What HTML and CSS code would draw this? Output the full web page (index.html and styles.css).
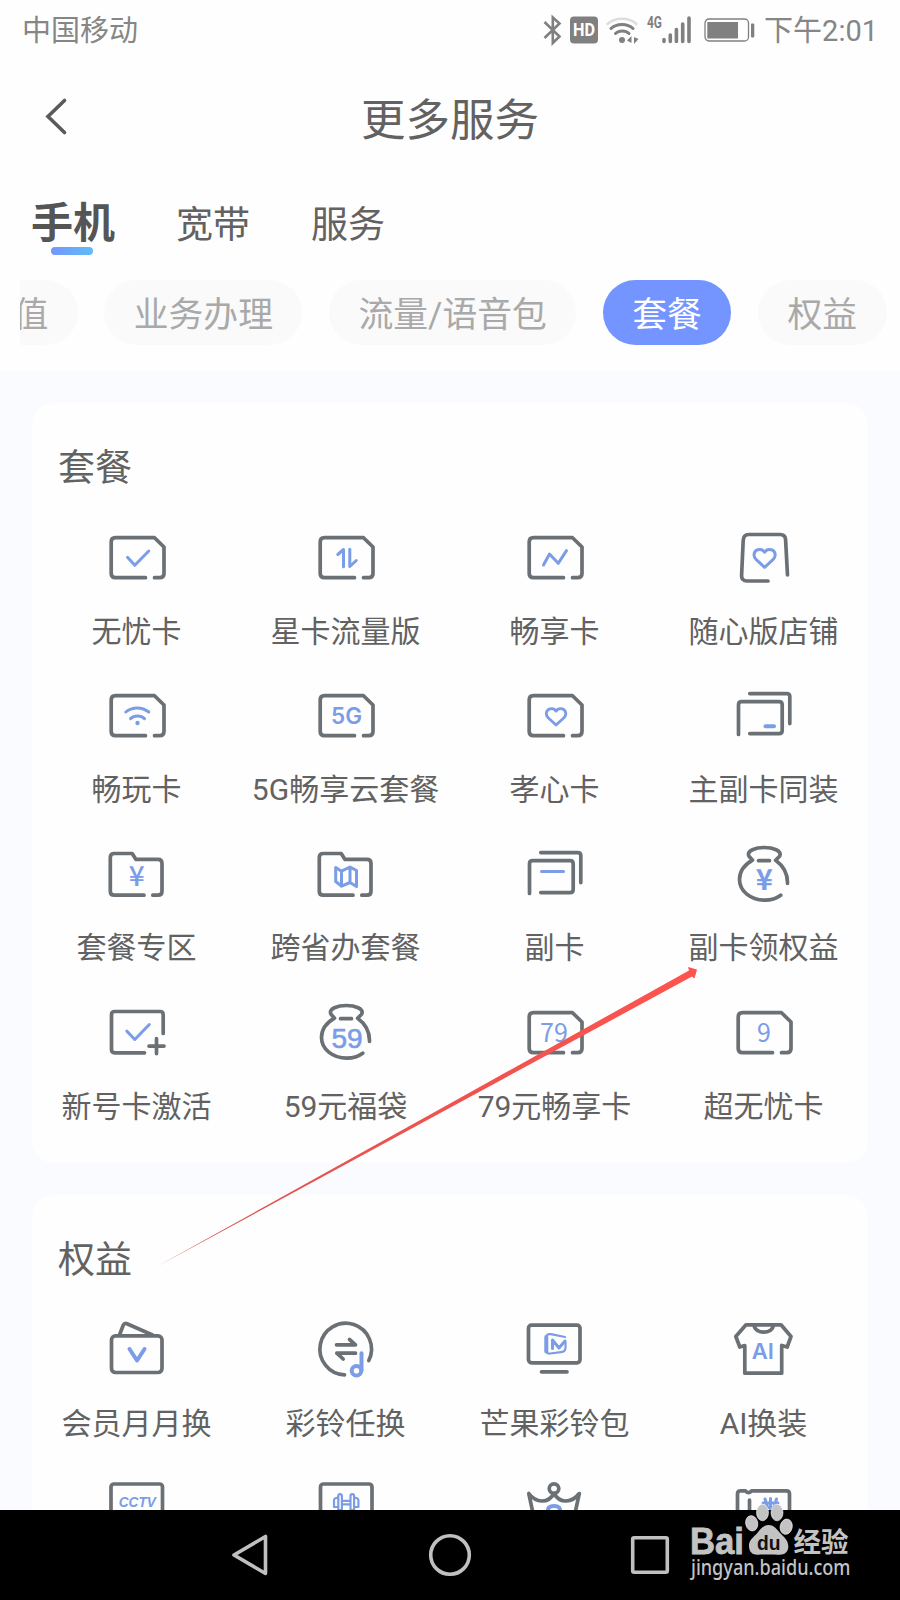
FILE: index.html
```html
<!DOCTYPE html>
<html lang="zh-CN">
<head>
    <meta charset="UTF-8">
    <meta name="viewport" content="width=device-width, initial-scale=1.0">
    <title>更多服务</title>
    <link rel="stylesheet" href="styles.css">
</head>
<body>
    <!-- shared shapes -->
    <svg class="defs" width="0" height="0">
        <symbol id="sim" viewBox="0 0 64 64">
            <path d="M40.5 51.7H10.5q-4.3 0-4.3-4.3V16q0-4.3 4.3-4.3H49.5L59 21V47.4q0 4.3-4.3 4.3H49.5"/>
        </symbol>
        <symbol id="folder" viewBox="0 0 64 64">
            <path d="M39 52.2H9.3q-4 0-4-4V14.5q0-4 4-4H27.2L31 16.4H53q4 0 4 4V48.2q0 4-4 4H47.8"/>
        </symbol>
        <symbol id="cards" viewBox="0 0 64 64">
            <path d="M17.8 9.6H54.8q3 0 3 3V39.6M6.5 50.4V20.9q0-3.2 3.2-3.2H47q3.2 0 3.2 3.2V46.4q0 3.2-3.2 3.2H17.8"/>
        </symbol>
        <symbol id="bag" viewBox="0 0 64 64">
            <path d="M48.7 52.2C44.5 55.3 39 57.2 33 57.2C18.5 57.2 7.5 48 7.5 36.5C7.5 28 13 21.5 20.5 17.2L17 13.2C14 7.5 24 4.5 32.3 4.5S50.5 7.5 47.6 13.2L43.6 17.2C51 22.5 55.8 30 55.5 40.5M26.5 17.7H37.5"/>
        </symbol>
        <symbol id="heart" viewBox="0 0 64 64">
            <path d="M32.6 41.3L24.3 33.7C20.7 30.2 21.5 25.2 25.9 23.7C28.6 23 31.2 24 32.6 26.2C34 24 36.6 23 39.3 23.7C43.7 25.2 44.5 30.2 40.9 33.7Z"/>
        </symbol>
    </svg>

    <div class="status-bar">
        <span class="carrier">中国移动</span>
        <div class="status-icons">
            <svg class="bt" width="19" height="32" viewBox="0 0 19 32"><path d="M1.5 8L16.5 22.5L9.8 29V3.5L16.5 9.5L1.5 24"/></svg>
            <svg class="hd" width="28" height="28" viewBox="0 0 28 28"><rect width="28" height="27" y=".5" rx="4"/><text x="14" y="20" textLength="22" lengthAdjust="spacingAndGlyphs">HD</text></svg>
            <svg class="wifi" width="34" height="32" viewBox="0 0 34 32">
                <path class="faint" d="M1.5 10C9 3 23 3 30.5 10"/>
                <path d="M5 14.5C10.5 9 21.5 9 27 14.5M9.5 19.5C13 16 19.5 16 23 19.5"/>
                <circle cx="16" cy="26" r="3"/><path class="solid" d="M25.5 22v7l-4.5-2.500zM28 23v7l4.5-5z"/>
            </svg>
            <svg class="signal" width="46" height="32" viewBox="0 0 46 32">
                <text x="1" y="14" textLength="15" lengthAdjust="spacingAndGlyphs">4G</text>
                <path d="M18 25.5v2M24.3 21v6.500M30.4 15.5v12M36.7 10v17.5M43 4v23.5"/>
            </svg>
            <svg class="battery" width="51" height="24" viewBox="0 0 51 24">
                <rect class="case" x="1" y="1" width="43.5" height="22" rx="4"/>
                <rect x="3.3" y="4" width="30.7" height="16.5"/><rect x="47" y="5.5" width="3.3" height="14" rx="1"/>
            </svg>
        </div>
        <span class="time">下午2:01</span>
    </div>

    <header class="title-bar">
        <svg class="back" width="24" height="40" viewBox="0 0 24 40"><path d="M20.5 3.5L4 19.5L20.5 35.5"/></svg>
        <h1>更多服务</h1>
    </header>

    <nav class="tabs">
        <a class="tab active">手机</a>
        <a class="tab">宽带</a>
        <a class="tab">服务</a>
    </nav>

    <div class="chips">
        <span class="chip">充值</span>
        <span class="chip">业务办理</span>
        <span class="chip">流量/语音包</span>
        <span class="chip active">套餐</span>
        <span class="chip">权益</span>
    </div>

    <main class="content">
        <section class="card">
            <h2>套餐</h2>
            <div class="grid">
                <div class="item">
                    <svg class="icon" viewBox="0 0 64 64"><use href="#sim"/><path class="b" d="M22.5 31.3L29.8 39.3L43.8 25"/></svg>
                    <span>无忧卡</span>
                </div>
                <div class="item">
                    <svg class="icon" viewBox="0 0 64 64"><use href="#sim"/><path class="b" d="M23.8 28.5L29.5 23.5V40.7M35.8 23.3V40.5L42.3 34.5"/></svg>
                    <span>星卡流量版</span>
                </div>
                <div class="item">
                    <svg class="icon" viewBox="0 0 64 64"><use href="#sim"/><path class="b" d="M20.5 39L26.5 28L35.2 37.3L43.5 24.7"/></svg>
                    <span>畅享卡</span>
                </div>
                <div class="item">
                    <svg class="icon" viewBox="0 0 64 64"><path d="M36 55H15c-3.6 0-5.6-2-5.4-5.5l1.6-35c.2-4 2-6 5.5-6H48c3.5 0 5.5 2 5.6 5.5L55.5 49"/><use class="b" href="#heart"/></svg>
                    <span>随心版店铺</span>
                </div>

                <div class="item">
                    <svg class="icon" viewBox="0 0 64 64"><use href="#sim"/><path class="b" d="M20.8 28C27 22.5 37 22.5 43.8 28M25.5 34.6C29 31 36 31 39.5 34.6"/><circle class="bf" cx="32.5" cy="39" r="2.2"/></svg>
                    <span>畅玩卡</span>
                </div>
                <div class="item">
                    <svg class="icon" viewBox="0 0 64 64"><use href="#sim"/><text class="t5g" x="32.5" y="39.7">5G</text></svg>
                    <span>5G畅享云套餐</span>
                </div>
                <div class="item">
                    <svg class="icon" viewBox="0 0 64 64"><use href="#sim"/><use class="b" href="#heart" x="3" y="3" width="59" height="59"/></svg>
                    <span>孝心卡</span>
                </div>
                <div class="item">
                    <svg class="icon" viewBox="0 0 64 64"><use href="#cards"/><path class="b thick" d="M33.5 42.3H42"/></svg>
                    <span>主副卡同装</span>
                </div>

                <div class="item">
                    <svg class="icon" viewBox="0 0 64 64"><use href="#folder"/><text class="yen" x="31.7" y="42.8">¥</text></svg>
                    <span>套餐专区</span>
                </div>
                <div class="item">
                    <svg class="icon" viewBox="0 0 64 64"><use href="#folder"/><path class="b" d="M21.7 24.5L27.5 28.2L36 24L42.5 27.5V43.5L36 39.5L27.5 43.2L21.7 38.5ZM27.5 28.2V43.2M36 24V39.5"/></svg>
                    <span>跨省办套餐</span>
                </div>
                <div class="item">
                    <svg class="icon" viewBox="0 0 64 64"><use href="#cards"/><path class="b" d="M18.5 28.5H40.5"/></svg>
                    <span>副卡</span>
                </div>
                <div class="item">
                    <svg class="icon" viewBox="0 0 64 64"><use href="#bag"/><text class="yen bold" x="32.3" y="46.5">¥</text></svg>
                    <span>副卡领权益</span>
                </div>

                <div class="item">
                    <svg class="icon" viewBox="0 0 64 64"><path d="M39.5 51.8H9.7q-3.2 0-3.2-3.2V13.7q0-3.2 3.2-3.2H55q3.2 0 3.2 3.2V32.5M44 45.1H59M51.5 37.6V52.6"/><path class="b" d="M21.8 30.1L29.8 38.5L44.3 23.5"/></svg>
                    <span>新号卡激活</span>
                </div>
                <div class="item">
                    <svg class="icon" viewBox="0 0 64 64"><use href="#bag"/><text class="t59" x="33" y="47.3">59</text></svg>
                    <span>59元福袋</span>
                </div>
                <div class="item">
                    <svg class="icon" viewBox="0 0 64 64"><use href="#sim"/><text class="num" x="31" y="40.5">79</text></svg>
                    <span>79元畅享卡</span>
                </div>
                <div class="item">
                    <svg class="icon" viewBox="0 0 64 64"><use href="#sim"/><text class="num" x="32" y="40.5">9</text></svg>
                    <span>超无忧卡</span>
                </div>
            </div>
        </section>

        <section class="card">
            <h2>权益</h2>
            <div class="grid">
                <div class="item">
                    <svg class="icon" viewBox="0 0 64 64"><rect x="6.5" y="17.8" width="50.5" height="36.7" rx="4"/><path d="M14.5 17L18.3 7Q19.5 4.7 22 5.7L47.5 17"/><path class="b thick" d="M24.5 31L32 42.5L39.5 31"/></svg>
                    <span>会员月月换</span>
                </div>
                <div class="item">
                    <svg class="icon" viewBox="0 0 64 64"><path d="M30.5 56.8A25.8 25.8 0 1 1 54.8 42.5M22.5 26.8H41.5L35.5 21.5M41.5 35.2H22.8L29.2 41"/><path class="b thick" d="M47.5 35.2V52.5"/><circle class="b thick" cx="42.5" cy="52.8" r="4.8"/></svg>
                    <span>彩铃任换</span>
                </div>
                <div class="item">
                    <svg class="icon" viewBox="0 0 64 64"><rect x="5.5" y="7.2" width="51.5" height="37.6" rx="3"/><path d="M18.5 53.8H44"/><path class="b thin" d="M42 19L28 16.2C24.5 15.700 23 17 23 20V31.5C23 34.5 24 35.800 27 35.5L38 34.2C41 33.8 42.500 32.500 42.5 29.5V24"/><path class="b thick" d="M23.3 19V33.5"/><path class="b" d="M29.5 30.5V22L36 30L42 23"/></svg>
                    <span>芒果彩铃包</span>
                </div>
                <div class="item">
                    <svg class="icon" viewBox="0 0 64 64"><path d="M14 6.8H49L59 18.5L55.2 29L49.7 27.5V55.2H12.8V27.5L7.8 29L3.8 18.5ZM22 7C23 16.5 40.5 16.5 41.5 7"/><text class="ai" x="30.7" y="40.7">AI</text></svg>
                    <span>AI换装</span>
                </div>

                <div class="item">
                    <svg class="icon" viewBox="0 0 64 64"><rect x="6" y="8" width="51.5" height="44" rx="3"/><text class="cctv" x="32.3" y="31.3" textLength="37" lengthAdjust="spacingAndGlyphs">CCTV</text></svg>
                </div>
                <div class="item">
                    <svg class="icon" viewBox="0 0 64 64"><rect x="6.5" y="8" width="51.5" height="44" rx="3"/><path class="b thin" d="M24.3 20q0-1.800 1.8-1.800t1.8 1.8V34h-3.6zM36.5 20q0-1.800 1.8-1.800t1.8 1.8V34h-3.6zM24.3 22q-4.3-.5-4.3 2.5v6.500h4.3M40.1 22q4.3-.5 4.3 2.5v6.500h-4.3M28 24.8h8.500M28 28.3h8.500"/></svg>
                </div>
                <div class="item">
                    <svg class="icon" viewBox="0 0 64 64"><circle cx="31" cy="12.6" r="4.8"/><path d="M5.8 17.5L11 42H51L56.3 17.5C49 27 37 28 31 17.5C25 28 13 27 5.8 17.5Z"/><path class="b thick" d="M25 36Q24 30 31 30Q38 30 37 36"/></svg>
                </div>
                <div class="item">
                    <svg class="icon" viewBox="0 0 64 64"><path d="M5.500 50V18q0-3.2 3.2-3.2H13.5Q16.5 18.5 19.5 14.8H54.3q3.2 0 3.2 3.2V50M17.500 24V40"/><path class="b" d="M38.5 22.5V34M31 27L46 27M33 23L35.5 31M44.5 23L42 31M30 31.5H47.5"/></svg>
                </div>
            </div>
        </section>
    </main>

    <footer class="nav-bar">
        <svg width="40" height="44" viewBox="0 0 40 44"><path d="M4 22L35.5 3.5V40.5Z"/></svg>
        <svg width="44" height="44" viewBox="0 0 44 44"><circle cx="22" cy="22" r="19.3"/></svg>
        <svg width="40" height="44" viewBox="0 0 40 44"><rect x="2.7" y="4.7" width="34.6" height="34.6" rx="1.5"/></svg>
    </footer>

    <!-- pointer arrow -->
    <svg class="arrow" width="545" height="302" viewBox="155 966 545 302">
        <defs>
            <linearGradient id="fade" x1="0" y1="1" x2="1" y2="0">
                <stop offset="0" stop-color="#c9534f"/>
                <stop offset=".2" stop-color="#e2534f"/>
                <stop offset="1" stop-color="#ff534f"/>
            </linearGradient>
        </defs>
        <path fill="url(#fade)" d="M157 1266.5L450 1103.5L689 970.5L688 967L697 969.5L694.5 978.5L692 976.5L450 1107.800Z"/>
    </svg>

    <svg class="watermark" width="175" height="85" viewBox="685 1500 175 85">
        <g class="paw">
            <ellipse cx="751.7" cy="1523.3" rx="6" ry="7.7" transform="rotate(-12 751.7 1523.3)"/>
            <ellipse cx="762.5" cy="1512.5" rx="6" ry="8.3"/>
            <ellipse cx="777" cy="1512.5" rx="6" ry="8.3"/>
            <ellipse cx="786.2" cy="1526.7" rx="6" ry="7.7" transform="rotate(12 786.2 1526.7)"/>
            <path d="M768.5 1525C763 1525 760 1530 756 1534.5C751 1539 748.5 1542 749 1547C749.5 1552.5 753 1555 758 1554.7C763 1554.3 774 1554.3 779 1554.7C784 1555 788 1552.5 788.3 1547C788.5 1541 785 1538 781.5 1534.5C777 1530 774.5 1525 768.5 1525Z"/>
        </g>
        <text class="bai" x="690" y="1553.5" textLength="54" lengthAdjust="spacingAndGlyphs">Bai</text>
        <text class="du" x="757" y="1549.5" textLength="23.500" lengthAdjust="spacingAndGlyphs">du</text>
        <text class="exp" x="793.5" y="1551.5" textLength="55">经验</text>
        <text class="url" x="691" y="1575" textLength="159.500" lengthAdjust="spacingAndGlyphs">jingyan.baidu.com</text>
    </svg>
</body>
</html>
```
FILE: styles.css
```css
* {
    box-sizing: border-box;
}
body {
    margin: 0;
    width: 900px;
    height: 1600px;
    overflow: hidden;
    position: relative;
    display: flex;
    flex-direction: column;
    font-family: Roboto, "Noto Sans CJK SC", sans-serif;
    font-weight: 400;
    color: #626262;
    background: #fefefe;
}
svg {
    flex-shrink: 0;
}
.defs {
    position: absolute;
}

/* status bar */
.status-bar {
    display: flex;
    align-items: center;
    height: 60px;
    padding: 0 22px 0 22px;
    font-size: 29px;
    line-height: 62px;
    color: #868686;
    flex-shrink: 0;
}
.carrier, .time {
    height: 60px;
}
.status-icons {
    display: flex;
    align-items: center;
    margin-left: auto;
    margin-right: 9px;
    fill: #808080;
}
.bt, .wifi path, .signal path {
    fill: none;
    stroke: #808080;
    stroke-width: 2.6;
}
.hd {
    margin-left: 8px;
}
.hd text {
    font-size: 19px;
    font-weight: 700;
    fill: #fff;
    text-anchor: middle;
}
.wifi {
    margin-left: 8px;
}
.wifi path {
    stroke-width: 3;
    stroke-linecap: round;
}
.wifi .faint {
    stroke: #ddd;
    stroke-width: 2.5;
}
.wifi .solid {
    fill: #808080;
    stroke: none;
}
.signal {
    margin-left: 6px;
}
.signal path {
    stroke-width: 3.6;
    stroke-linecap: round;
}
.signal text {
    font-size: 16px;
    font-weight: 700;
}
.battery {
    margin-left: 12px;
}
.battery .case {
    fill: none;
    stroke: #808080;
    stroke-width: 1.3;
}

/* header */
.title-bar {
    display: flex;
    align-items: center;
    height: 114px;
    padding: 0 44px;
    flex-shrink: 0;
}
.title-bar h1 {
    flex: 1;
    margin: 7px 24px 0 0;
    font-size: 44.5px;
    line-height: 60px;
    font-weight: 400;
    text-align: center;
}
.back path {
    fill: none;
    stroke: #5a5a5a;
    stroke-width: 3.6;
    stroke-linecap: round;
}
.tabs {
    display: flex;
    align-items: center;
    gap: 61px;
    height: 97px;
    padding: 7px 31px 0;
    font-size: 37px;
    flex-shrink: 0;
}
.tab {
    line-height: 60px;
}
.tab.active {
    position: relative;
    margin-top: -5px;
    font-size: 42px;
    font-weight: 700;
    color: #555;
}
.tab.active::after {
    content: '';
    position: absolute;
    left: 20px;
    bottom: -1px;
    width: 42px;
    height: 8px;
    border-radius: 4px;
    background: linear-gradient(to right, #7496fa, #5fbcf8);
}
.chips {
    display: flex;
    justify-content: flex-end;
    gap: 26.5px;
    height: 100px;
    margin-left: 20px;
    padding: 9px 13.5px 0 0;
    overflow: hidden;
    flex-shrink: 0;
}
.chip {
    height: 65px;
    padding: 3px 29.5px 0;
    border-radius: 33px;
    background: #fafafa;
    color: #a9a9a9;
    font-size: 34.8px;
    line-height: 65px;
    white-space: nowrap;
}
.chip.active {
    background: #7494ff;
    color: #fff;
}

/* service cards */
.content {
    flex: 1;
    min-height: 0;
    overflow: hidden;
    padding: 32px 32px 0;
    background: #fafbff;
}
.card {
    height: 760px;
    margin-bottom: 32px;
    padding-top: 36px;
    border-radius: 22px;
    background: #fefefe;
}
.card h2 {
    margin: 0 0 27px 26px;
    font-size: 37px;
    line-height: 60px;
    font-weight: 400;
}
.grid {
    display: grid;
    grid-template-columns: repeat(4, 1fr);
    grid-auto-rows: 158.4px;
}
.item {
    display: flex;
    flex-direction: column;
    align-items: center;
    gap: 21.5px;
    font-size: 30px;
    line-height: 40px;
    white-space: nowrap;
}
.icon {
    width: 64px;
    height: 64px;
    fill: none;
    stroke: #6b7075;
    stroke-width: 3.7;
    stroke-linecap: round;
    stroke-linejoin: round;
}
.icon .b {
    stroke: #7b9ce6;
    stroke-width: 3;
}
.icon .b.thick {
    stroke-width: 4;
}
.icon .b.thin {
    stroke-width: 2.2;
}
.icon .bf, .icon text {
    fill: #7b9ce6;
    stroke: none;
}
.icon text {
    text-anchor: middle;
    font-family: "Liberation Sans", sans-serif;
    font-weight: 400;
}
.icon .t5g {
    font-family: Inter, sans-serif;
    font-size: 22.5px;
    font-weight: 600;
}
.icon .yen {
    font-family: "Noto Sans CJK SC", sans-serif;
    font-size: 28px;
    font-weight: 500;
}
.icon .yen.bold {
    font-size: 29px;
    font-weight: 700;
}
.icon .t59 {
    font-size: 28px;
    stroke: #7b9ce6;
    stroke-width: .6;
}
.icon .num {
    font-family: "Noto Sans CJK SC", sans-serif;
    font-size: 25px;
}
.icon .ai {
    font-family: Inter, sans-serif;
    font-size: 22px;
    font-weight: 600;
}
.icon .cctv {
    font-size: 14.5px;
    font-weight: 700;
    font-style: italic;
}

/* system navigation */
.nav-bar {
    display: flex;
    justify-content: center;
    align-items: center;
    gap: 158px;
    height: 90px;
    background: #000;
    flex-shrink: 0;
}
.nav-bar svg {
    fill: none;
    stroke: #c0c0c0;
    stroke-width: 3.6;
    stroke-linejoin: round;
}

/* overlays */
.arrow {
    position: absolute;
    left: 155px;
    top: 966px;
}
.watermark {
    position: absolute;
    left: 685px;
    top: 1500px;
    fill: #c3c3c3;
}
.paw ellipse {
    stroke: #fff;
    stroke-width: .6;
}
.bai {
    font-family: "Liberation Sans", sans-serif;
    font-size: 36px;
    font-weight: 700;
    stroke: #c3c3c3;
    stroke-width: .8;
}
.du {
    font-family: "Liberation Sans", sans-serif;
    font-size: 21px;
    font-weight: 700;
    fill: #111;
}
.exp {
    font-family: "Noto Sans CJK SC", sans-serif;
    font-size: 27.5px;
    font-weight: 700;
}
.url {
    font-family: "Noto Sans", sans-serif;
    font-size: 21px;
    font-weight: 500;
}
```
